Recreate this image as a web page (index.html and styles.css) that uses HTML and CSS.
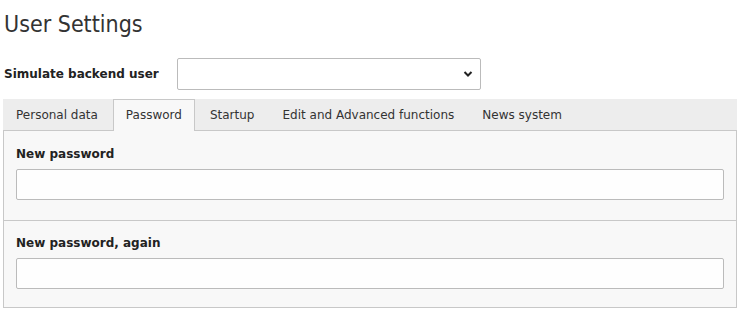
FILE: index.html
```html
<!DOCTYPE html>
<html lang="en">
<head>
    <meta charset="UTF-8">
    <title>User Settings</title>
    <link rel="stylesheet" href="styles.css">
</head>
<body>

<div class="module">
    <h1>User Settings</h1>

    <!-- Simulate user -->
    <div class="simulate">
        <label for="simUser">Simulate backend user</label>
        <div class="select-wrap">
            <select id="simUser">
                <option></option>
            </select>
            <svg class="chevron" width="10" height="8" viewBox="0 0 10 8">
                <path d="M1.5 2 L5 5.5 L8.5 2" fill="none" stroke="#222" stroke-width="2"/>
            </svg>
        </div>
    </div>

    <!-- Tabs -->
    <ul class="tabs">
        <li><a href="#">Personal data</a></li>
        <li class="active"><a href="#">Password</a></li>
        <li><a href="#">Startup</a></li>
        <li><a href="#">Edit and Advanced functions</a></li>
        <li><a href="#">News system</a></li>
    </ul>

    <div class="tab-panel">
        <div class="form-section">
            <label for="pw1">New password</label>
            <input type="password" id="pw1" class="form-control">
        </div>
        <div class="form-section">
            <label for="pw2">New password, again</label>
            <input type="password" id="pw2" class="form-control">
        </div>
    </div>
</div>

</body>
</html>
```

FILE: styles.css
```css
body {
    margin: 0;
    padding: 0;
    background-color: #fff;
    font-family: "DejaVu Sans", Verdana, sans-serif;
    font-size: 12px;
    line-height: 16px;
    color: #333;
}

.module {
    padding: 0 5px 0 3px;
}

h1 {
    font-family: "DejaVu Sans Condensed", "Liberation Sans Narrow", "Roboto", sans-serif;
    font-weight: normal;
    font-size: 23px;
    line-height: 30px;
    margin: 0;
    padding: 9px 0 0 1px;
    color: #333;
}

.simulate {
    display: flex;
    align-items: center;
    margin-top: 19px;
    padding-left: 1px;
}

.simulate label {
    font-weight: bold;
    color: #222;
    width: 173px;
}

.select-wrap {
    position: relative;
    width: 304px;
}

.select-wrap select {
    display: block;
    width: 100%;
    height: 32px;
    border: 1px solid #bbb;
    border-radius: 2px;
    background-color: #fff;
    appearance: none;
    -webkit-appearance: none;
    font: inherit;
}

.chevron {
    position: absolute;
    right: 8px;
    top: 12px;
}

.tabs {
    list-style: none;
    margin: 9px 0 0;
    padding: 0;
    display: flex;
    background-color: #ededed;
    border-bottom: 1px solid #c8c8c8;
}

.tabs li {
    margin-bottom: -1px;
    margin-right: 2px;
}

.tabs li a {
    display: block;
    padding: 7px 12px 7px;
    border: 1px solid transparent;
    border-bottom: none;
    color: #333;
    text-decoration: none;
    line-height: 16px;
}

.tabs li.active a {
    background-color: #f8f8f8;
    border-color: #c8c8c8;
    padding-bottom: 8px;
}

.tab-panel {
    background-color: #f8f8f8;
    border: 1px solid #c8c8c8;
    border-top: none;
}

.form-section {
    padding: 15px 12px 20px;
}

.form-section + .form-section {
    border-top: 1px solid #c8c8c8;
    padding-top: 14px;
    padding-bottom: 18px;
}

.form-section label {
    display: block;
    font-weight: bold;
    color: #222;
    margin-bottom: 7px;
}

.form-control {
    display: block;
    box-sizing: border-box;
    width: 100%;
    height: 31px;
    border: 1px solid #bbb;
    border-radius: 2px;
    background-color: #fefefe;
    font: inherit;
}
```
